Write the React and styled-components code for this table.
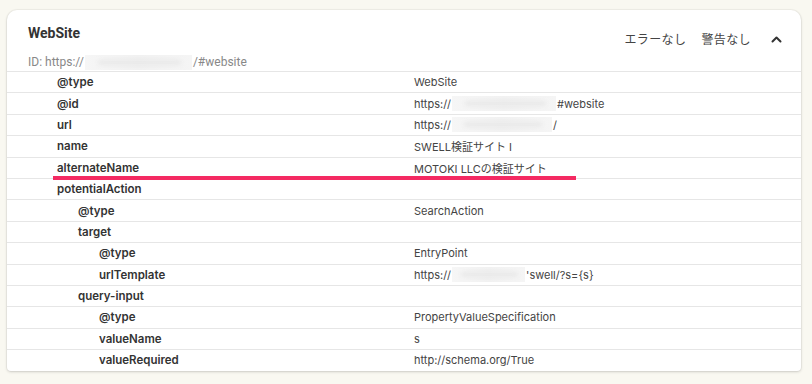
import React from "react";
import styled, { createGlobalStyle } from "styled-components";

const Global = createGlobalStyle`
  html, body { margin: 0; padding: 0; background: #f9f8f1; }
  body { font-family: Inter, "Noto Sans CJK JP", sans-serif; }
`;

const Page = styled.div`
  padding: 10px 11px 12px 7px;
`;

const Card = styled.section`
  background: #fff;
  border-radius: 10px 10px 4px 4px;
  box-shadow: 0 1px 3px rgba(0, 0, 0, 0.16), 0 0 0 1px rgba(0, 0, 0, 0.03);
`;

const Header = styled.header`
  display: flex;
  justify-content: space-between;
  align-items: flex-start;
  padding: 14px 19px 1px 21px;
`;

const HeadLeft = styled.div`
  display: flex;
  flex-direction: column;
`;

const Title = styled.h2`
  margin: 0 0 12px;
  font-family: Roboto, "Noto Sans CJK JP", sans-serif;
  font-size: 14px;
  line-height: 18px;
  font-weight: 700;
  color: #333;
`;

const IdLine = styled.div`
  display: flex;
  align-items: center;
  font-family: Roboto, "Noto Sans CJK JP", sans-serif;
  font-size: 12px;
  line-height: 16px;
  color: #888;
`;

const Status = styled.div`
  display: flex;
  align-items: center;
  margin-top: 7px;
  font-family: "Noto Sans CJK JP", sans-serif;
  font-size: 12px;
  line-height: 16px;
  letter-spacing: 0.4px;
  color: #444;
`;

const StatusItem = styled.span`
  margin-right: ${(p) => p.$gap || 0}px;
`;

const Chevron = styled.svg`
  display: block;
  width: 11px;
  height: 8px;
`;

const Blur = styled.span`
  position: relative;
  display: inline-block;
  width: ${(p) => p.$w}px;
  height: 15px;
  margin: 0 ${(p) => p.$mr ?? 1}px 0 ${(p) => p.$ml ?? 1}px;
  background: linear-gradient(90deg, #f6f6f6, #f1f1f1 50%, #f5f5f5);
  vertical-align: middle;
  &::after {
    content: "";
    position: absolute;
    left: 12%;
    right: 10%;
    top: 6px;
    height: 3px;
    border-radius: 2px;
    background: #e4e4e4;
    filter: blur(2px);
  }
`;

const Table = styled.div`
  border-top: 1px solid #e6e6e6;
`;

const Row = styled.div`
  position: relative;
  display: grid;
  grid-template-columns: 407px 1fr;
  align-items: center;
  height: 21.4px;
  box-sizing: border-box;
  border-bottom: 1px solid ${(p) => (p.$last ? "transparent" : "#e6e6e6")};
  font-size: 11.5px;
`;

const Key = styled.div`
  padding-left: ${(p) => 50 + p.$level * 21}px;
  font-weight: 600;
  color: #333;
  white-space: nowrap;
`;

const Value = styled.div`
  display: flex;
  align-items: center;
  font-size: 11px;
  color: #444;
  white-space: nowrap;
`;

const Mark = styled.span`
  position: absolute;
  left: 46px;
  width: 523px;
  bottom: -2px;
  height: 4px;
  background: #f42a62;
  z-index: 1;
`;

const rows = [
  { k: "@type", l: 0, v: ["WebSite"] },
  { k: "@id", l: 0, v: ["https://", { blur: 104 }, "#website"] },
  { k: "url", l: 0, v: ["https://", { blur: 100 }, "/"] },
  { k: "name", l: 0, v: ["SWELL検証サイト I"] },
  { k: "alternateName", l: 0, v: ["MOTOKI LLCの検証サイト"], mark: true },
  { k: "potentialAction", l: 0, v: [] },
  { k: "@type", l: 1, v: ["SearchAction"] },
  { k: "target", l: 1, v: [] },
  { k: "@type", l: 2, v: ["EntryPoint"] },
  { k: "urlTemplate", l: 2, v: ["https://", { blur: 73 }, "'swell/?s={s}"] },
  { k: "query-input", l: 1, v: [] },
  { k: "@type", l: 2, v: ["PropertyValueSpecification"] },
  { k: "valueName", l: 2, v: ["s"] },
  { k: "valueRequired", l: 2, v: ["http://schema.org/True"] },
];

export default function App() {
  return (
    <>
      <Global />
      <Page>
        <Card>
          <Header>
            <HeadLeft>
              <Title>WebSite</Title>
              <IdLine>
                ID: https://
                <Blur $w={107} $ml={1} $mr={1} />
                /#website
              </IdLine>
            </HeadLeft>
            <Status>
              <StatusItem $gap={15}>エラーなし</StatusItem>
              <StatusItem $gap={20}>警告なし</StatusItem>
              <Chevron viewBox="0 0 11 8" aria-hidden="true">
                <path
                  d="M1.5 6.5 L5.5 2.5 L9.5 6.5"
                  fill="none"
                  stroke="#333"
                  strokeWidth="2"
                  strokeLinecap="round"
                  strokeLinejoin="round"
                />
              </Chevron>
            </Status>
          </Header>
          <Table>
            {rows.map((r, i) => (
              <Row key={i} $last={i === rows.length - 1}>
                <Key $level={r.l}>{r.k}</Key>
                <Value>
                  {r.v.map((part, j) =>
                    typeof part === "string" ? (
                      <span key={j}>{part}</span>
                    ) : (
                      <Blur key={j} $w={part.blur} />
                    )
                  )}
                </Value>
                {r.mark && <Mark />}
              </Row>
            ))}
          </Table>
        </Card>
      </Page>
    </>
  );
}
